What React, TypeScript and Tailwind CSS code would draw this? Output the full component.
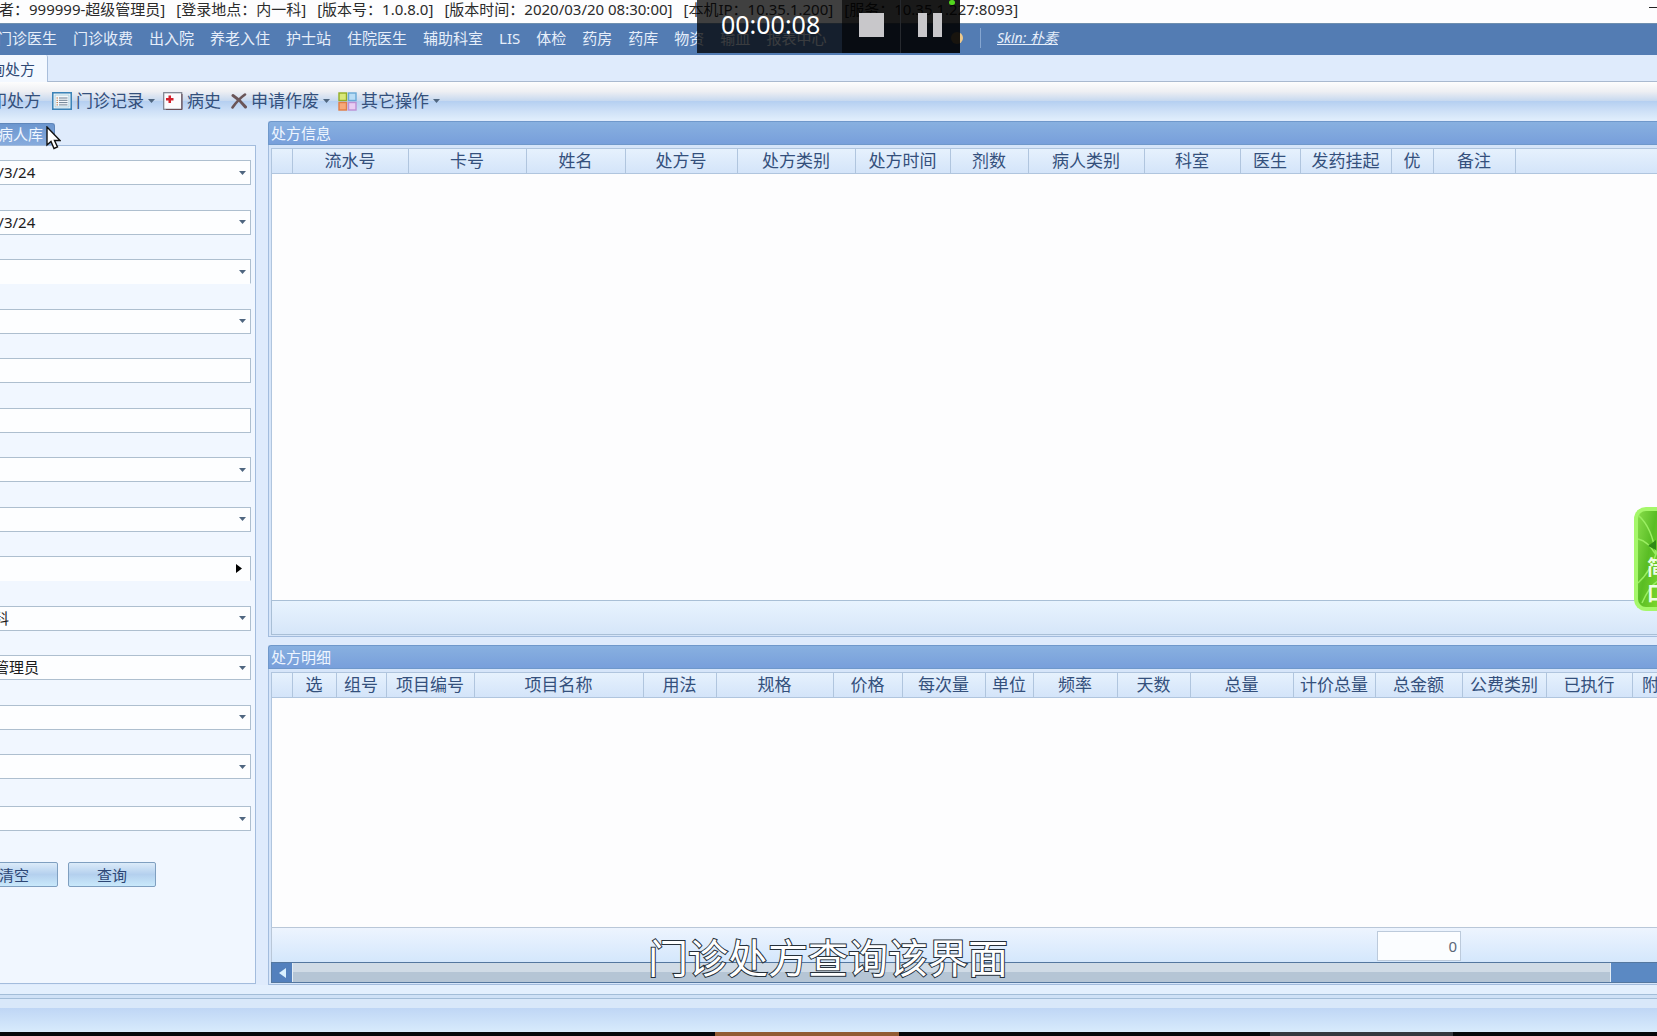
import React from 'react';

interface Column {
  title: string;
  width: number;
}

interface Field {
  label: string;
  kind: 'select' | 'input' | 'popup';
  value?: string;
  open?: boolean;
}

const statusItems = ['登录者：999999-超级管理员]', '[登录地点：内一科]', '[版本号：1.0.8.0]', '[版本时间：2020/03/20 08:30:00]', '[本机IP：10.35.1.200]', '[服务：10.35.1.227:8093]'];

const menuItems = ['门诊医生', '门诊收费', '出入院', '养老入住', '护士站', '住院医生', '辅助科室', 'LIS', '体检', '药房', '药库', '物资', '输血', '报表中心'];

const fields: Field[] = [
  { label: '开始日期', kind: 'select', value: '2020/3/24' },
  { label: '结束日期', kind: 'select', value: '2020/3/24' },
  { label: '处方类别', kind: 'select', open: true },
  { label: '病人类别', kind: 'select' },
  { label: '卡号', kind: 'input' },
  { label: '姓名', kind: 'input' },
  { label: '状态', kind: 'select' },
  { label: '费别', kind: 'select' },
  { label: '诊断', kind: 'popup', open: true },
  { label: '科室', kind: 'select', value: '内一科' },
  { label: '医生', kind: 'select', value: '超级管理员' },
  { label: '药房', kind: 'select' },
  { label: '收费', kind: 'select' },
];

const infoColumns: Column[] = [
  { title: '', width: 20 },
  { title: '流水号', width: 116 },
  { title: '卡号', width: 118 },
  { title: '姓名', width: 99 },
  { title: '处方号', width: 112 },
  { title: '处方类别', width: 118 },
  { title: '处方时间', width: 95 },
  { title: '剂数', width: 78 },
  { title: '病人类别', width: 116 },
  { title: '科室', width: 96 },
  { title: '医生', width: 60 },
  { title: '发药挂起', width: 91 },
  { title: '优', width: 42 },
  { title: '备注', width: 82 },
];

const detailColumns: Column[] = [
  { title: '', width: 20 },
  { title: '选', width: 44 },
  { title: '组号', width: 50 },
  { title: '项目编号', width: 88 },
  { title: '项目名称', width: 169 },
  { title: '用法', width: 73 },
  { title: '规格', width: 117 },
  { title: '价格', width: 69 },
  { title: '每次量', width: 83 },
  { title: '单位', width: 48 },
  { title: '频率', width: 84 },
  { title: '天数', width: 73 },
  { title: '总量', width: 103 },
  { title: '计价总量', width: 82 },
  { title: '总金额', width: 87 },
  { title: '公费类别', width: 84 },
  { title: '已执行', width: 86 },
  { title: '附加费', width: 71 },
];

const Caret: React.FC = () => (
  <svg className="w-[7px] h-1 shrink-0" viewBox="0 0 7 4" fill="#4f6680">
    <path d="M0 0h7L3.5 4z" />
  </svg>
);

const FieldBox: React.FC<{ field: Field }> = ({ field }) => {
  const { label, kind, value = '', open } = field;
  const box = `block w-full h-[25px] pl-1 appearance-none rounded-none outline-none bg-[#fdfeff] border border-[#aebfcf] text-[15px] leading-[23px] text-[#1c1c1c] ${open ? 'border-b-transparent' : ''}`;

  if (kind === 'input') return <input aria-label={label} className={box} defaultValue={value} />;

  return (
    <div className="relative">
      {kind === 'select' ? (
        <select aria-label={label} className={box}>
          <option>{value}</option>
        </select>
      ) : (
        <input aria-label={label} className={box} defaultValue={value} />
      )}
      <span className="absolute inset-y-0 right-[5px] flex items-center pointer-events-none">
        {kind === 'select' ? (
          <Caret />
        ) : (
          <svg className="w-[6px] h-[9px] mr-1" viewBox="0 0 6 9"><path d="M0 0l6 4.5L0 9z" /></svg>
        )}
      </span>
    </div>
  );
};

const ToolButton: React.FC<{ text: string; icon?: React.ReactNode; menu?: boolean }> = ({ text, icon, menu }) => (
  <button className="flex items-center gap-1 whitespace-nowrap">
    {icon}
    <span>{text}</span>
    {menu && <Caret />}
  </button>
);

const HeaderTable: React.FC<{ columns: Column[] }> = ({ columns }) => (
  <table className="table-fixed w-full min-w-max border-collapse">
    <colgroup>
      {columns.map((c, i) => <col key={i} style={{ width: c.width }} />)}
      <col />
    </colgroup>
    <thead>
      <tr className="h-[25px] bg-linear-to-b from-[#e6f1fd] to-[#d3e4f9]">
        {columns.map((c, i) => (
          <th key={i} className="p-0 border border-l-0 border-[#b0c5de] text-[17px] leading-[22px] font-normal text-[#34507c] whitespace-nowrap">{c.title}</th>
        ))}
        <th className="p-0 border-y border-[#b0c5de]" />
      </tr>
    </thead>
  </table>
);

const Panel: React.FC<{ title: string; className: string; children: React.ReactNode }> = ({ title, className, children }) => (
  <section className={`flex flex-col min-h-0 ${className}`}>
    <h2 className="h-6 pl-0.5 shrink-0 rounded-tl-[3px] border border-r-0 border-[#6f98cb] bg-linear-to-b from-[#88b0e0] to-[#789fdb] text-[15px] leading-[22px] text-[#eef5ff]">{title}</h2>
    <div className="flex-1 min-h-0 flex flex-col pt-[3px] pl-0.5 pb-px border-l border-b border-[#a3bcdd] bg-[#d6e5f9]">
      <div className="flex-1 min-h-0 flex flex-col overflow-hidden bg-[#fdfdfe]">{children}</div>
    </div>
  </section>
);

const RecordIcon = (
  <svg className="w-5 h-[18px]" viewBox="0 0 20 18">
    <rect x=".8" y=".8" width="18.4" height="16.4" fill="#fff" stroke="#3c84b8" strokeWidth="1.6" />
    <rect x="3" y="3" width="14" height="12" fill="#f4f8fb" stroke="#a9cfe0" />
    <path d="M4.5 6H6M4.5 8.3H6M4.5 10.6H6M4.5 12.9H6" stroke="#c07a4a" />
    <path d="M7 6h8.5M7 8.3h8.5M7 10.6h8.5M7 12.9h8.5" stroke="#6c7f92" />
  </svg>
);

const HistoryIcon = (
  <svg className="w-5 h-[18px]" viewBox="0 0 20 18">
    <rect x=".7" y=".7" width="18" height="16.6" fill="#fbfbfd" stroke="#7b7f8c" strokeWidth="1.2" />
    <path d="M19 2v15.500H3" fill="none" stroke="#6a4d54" />
    <path d="M5.500 3.500h2.500v2.500h2.500v2.500H8V11H5.500V8.500H3V6h2.500z" fill="#d3202b" />
  </svg>
);

const CancelIcon = (
  <svg className="w-4 h-4" viewBox="0 0 16 16" fill="none" stroke="#6a5558" strokeLinecap="round">
    <path d="M2 2.500C6 5 11 9.500 14.500 14" strokeWidth="3" />
    <path d="M14 1.500C9 5 5 9.500 1.500 14.500" strokeWidth="2.600" />
  </svg>
);

const OtherIcon = (
  <svg className="w-[19px] h-[19px]" viewBox="0 0 19 19" strokeWidth="1.400">
    <rect x="1" y="1" width="7.500" height="7.500" fill="#d9e87a" stroke="#93ad24" />
    <rect x="10.500" y="1" width="7.500" height="7.500" fill="#b9ddf6" stroke="#69a9d6" />
    <rect x="1" y="10.500" width="7.500" height="7.500" fill="#f7a877" stroke="#e27c45" />
    <rect x="10.500" y="10.500" width="7.500" height="7.500" fill="#e9cdf3" stroke="#bd91d4" />
  </svg>
);

const actionButton = 'w-[88px] h-[25px] rounded-xs border border-[#7f9fc0] bg-linear-to-b from-[#dcebf9] via-[#b4d0ee] to-[#c9e9fb] text-[15px] leading-[22px] text-[#2c4674]';

const App: React.FC = () => {
  return (
    <div className="relative flex flex-col h-screen overflow-hidden bg-[#dfebfc] font-['Noto_Sans','Noto_Sans_CJK_SC',sans-serif]">
      <header className="h-[23px] shrink-0 flex justify-between overflow-hidden bg-[#fdfdfe] text-[15px] leading-[18px] text-[#2b2b2b]">
        <div className="flex gap-[11px] -ml-[31px] whitespace-nowrap">
          {statusItems.map((s) => <span key={s}>{s}</span>)}
        </div>
        <button aria-label="最小化" className="w-2 h-2 border-b border-[#222]" />
      </header>

      <nav className="h-8 pb-1 shrink-0 flex items-center bg-[#537cb3] border-t border-[#6f8faf] text-[15px] leading-5 text-[#e6eefa] whitespace-nowrap">
        <div className="w-[972px] shrink-0 flex gap-4 -ml-[3px] pr-[6px] overflow-hidden">
          {menuItems.map((m) => <button key={m} className="shrink-0">{m}</button>)}
          <span className="ml-auto w-3 h-3 self-center rounded-full bg-[#eec98a]" />
        </div>
        <div className="h-5 ml-[11px] pl-4 flex items-center border-l border-[#86a6d0]">
          <a href="#skin" className="text-sm italic underline">Skin: 朴素</a>
        </div>
      </nav>

      <div className="h-[27px] shrink-0 flex border-b border-[#a9b9cf]">
        <button className="-ml-3 w-[60px] h-[27px] pr-3 pt-0.5 shrink-0 flex justify-end items-center rounded-tr-xs border-r border-[#a9bedb] bg-[#f3f8ff] text-[15px] text-[#2f4975] whitespace-nowrap">查询处方</button>
      </div>

      <div className="h-[38px] shrink-0 flex items-center bg-[linear-gradient(#fdfdfd,#eeeff3_25%,#c6d8ef_50%,#b5cff1_51%,#cfe1f7_78%,#e0eefc)] text-[17px] leading-6 text-[#34507c]">
        <div className="-ml-[27px] w-[69px] mr-[10px]"><ToolButton text="打印处方" /></div>
        <div className="flex items-center gap-2">
          <ToolButton text="门诊记录" icon={RecordIcon} menu />
          <div className="mr-0.5"><ToolButton text="病史" icon={HistoryIcon} /></div>
          <ToolButton text="申请作废" icon={CancelIcon} menu />
          <ToolButton text="其它操作" icon={OtherIcon} menu />
        </div>
      </div>

      <main className="flex-1 min-h-0 flex gap-3 pt-px">
        <aside className="w-[300px] -ml-11 mb-px shrink-0 flex flex-col">
          <div className="h-6 pt-0.5 flex shrink-0">
            <h2 className="w-[99px] pr-[11px] flex justify-end rounded-tr-[3px] border border-b-0 border-[#5f86ba] bg-linear-to-b from-[#6c96cf] to-[#87abdd] text-[15px] leading-5 text-[#eef5ff] whitespace-nowrap">查找病人库</h2>
          </div>
          <form className="flex-1 min-h-0 flex flex-col pt-[14px] pl-0.5 pr-1 pb-24 border border-[#a3bcdd] bg-[#f1f7ff]" onSubmit={(e) => e.preventDefault()}>
            <div className="flex-1 flex flex-col justify-between">
              {fields.map((f) => <FieldBox key={f.label} field={f} />)}
            </div>
            <div className="mt-[27px]"><FieldBox field={{ label: '打印', kind: 'select' }} /></div>
            <div className="mt-[31px] pl-[11px] flex gap-[10px]">
              <button type="reset" className={actionButton}>清空</button>
              <button type="submit" className={actionButton}>查询</button>
            </div>
          </form>
        </aside>

        <div className="flex-1 min-w-0 flex flex-col gap-2 overflow-hidden">
          <Panel title="处方信息" className="grow-[516] basis-0">
            <div className="flex-1 min-h-0 border-l border-[#b0c5de]">
              <HeaderTable columns={infoColumns} />
            </div>
            <div className="h-[35px] shrink-0 border border-r-0 border-[#a9bfd6] bg-linear-to-b from-[#e8f3fe] to-[#d6e6f9]" />
          </Panel>

          <Panel title="处方明细" className="grow-[340] basis-0">
            <div className="flex-1 min-h-0 border-l border-[#b0c5de]">
              <HeaderTable columns={detailColumns} />
            </div>
            <div className="h-[35px] shrink-0 pt-[3px] flex border-t border-l border-[#b9c7d8] bg-linear-to-b from-[#edf4fe] to-[#d4e7fc]">
              <output className="ml-[1105px] w-[84px] h-[30px] pr-[3px] border border-[#bccadb] bg-[#fbfdff] text-right text-[15px] leading-7 text-[#5b6878]">0</output>
            </div>
            <div className="h-[21px] shrink-0 flex border border-r-0 border-[#54779f] bg-[#5b89c3]">
              <button aria-label="向左滚动" className="w-5 flex items-center justify-center bg-[#5380bd]">
                <svg className="w-[7px] h-[10px]" viewBox="0 0 7 10" fill="#d9f0ff"><path d="M7 0v10L0 5z" /></svg>
              </button>
              <div className="flex-1 border-x border-[#e3edf6] bg-linear-to-b from-[#d0dbe6] from-50% to-[#b5c5d5] to-50%" />
              <div className="w-[46px]" />
            </div>
          </Panel>
        </div>
      </main>

      <footer className="shrink-0">
        <div className="h-[9px] bg-[#e3effd]" />
        <div className="h-[5px] border-y border-[#a3bdd8] bg-[#cfe1f6]" />
        <div className="h-[9px] bg-[#d9e8fa]" />
        <div className="h-6 bg-linear-to-b from-[#bfd6f5] to-[#d8ebfc]" />
        <div className="h-1 flex bg-[#05080b]">
          <div className="ml-[715px] w-[184px] bg-[#925c33]" />
          <div className="ml-[371px] w-[183px] bg-[#35383f]" />
        </div>
      </footer>

      <div className="absolute top-0 left-[697px] h-[53px] flex text-white">
        <time className="w-[145px] pl-6 pt-2 bg-black/75 text-[25px] leading-8">00:00:08</time>
        <button aria-label="停止" className="w-[59px] pl-[17px] pt-[13px] flex items-start bg-black/90 border-r border-[#26292e]">
          <span className="w-[25px] h-6 bg-[#c8c7ca]" />
        </button>
        <button aria-label="暂停" className="w-[59px] pl-[17px] pt-[13px] flex items-start gap-[6px] bg-black/90">
          <span className="w-[9px] h-6 bg-[#c8c7ca]" />
          <span className="w-[9px] h-6 bg-[#c8c7ca]" />
        </button>
        <i className="absolute top-0 right-[5px] w-[6px] h-[5px] rounded-full bg-[#52d51e]" />
      </div>

      <div className="absolute right-0 top-[507px] w-[23px] h-[104px] pl-[9px] pt-11 overflow-hidden rounded-l-xl border-4 border-r-0 border-[#a5f76a] bg-linear-to-br from-[#86dc48] via-[#59bd24] to-[#7bd62c] text-xl leading-[26px] font-bold text-[#edffe3]">
        <svg className="absolute top-0 left-0 w-5 h-24" viewBox="0 0 20 96" fill="none">
          <path d="M0 4q14 12 18 40M0 28q10 2 18 16M0 72q12-10 20-34M4 92q8-18 16-22" stroke="#9aee62" strokeWidth="1.500" />
          <path d="M10 35l8-6v10z" fill="#2f8a14" />
        </svg>
        <span className="relative block w-5">简</span>
        <span className="relative block w-5">口</span>
      </div>

      <p className="absolute left-[648px] bottom-[53px] text-[40px] leading-[50px] text-white whitespace-nowrap [-webkit-text-stroke:2px_#26303a] [paint-order:stroke]">门诊处方查询该界面</p>

      <svg className="absolute left-[46px] top-[126px] w-[15px] h-6" viewBox="0 0 15 24">
        <path d="M1 1v18l4-3.500 3 7 3.500-1.500-3-6.500H14z" fill="#fff" stroke="#111" strokeWidth="1.400" />
      </svg>
    </div>
  );
};

export default App;
